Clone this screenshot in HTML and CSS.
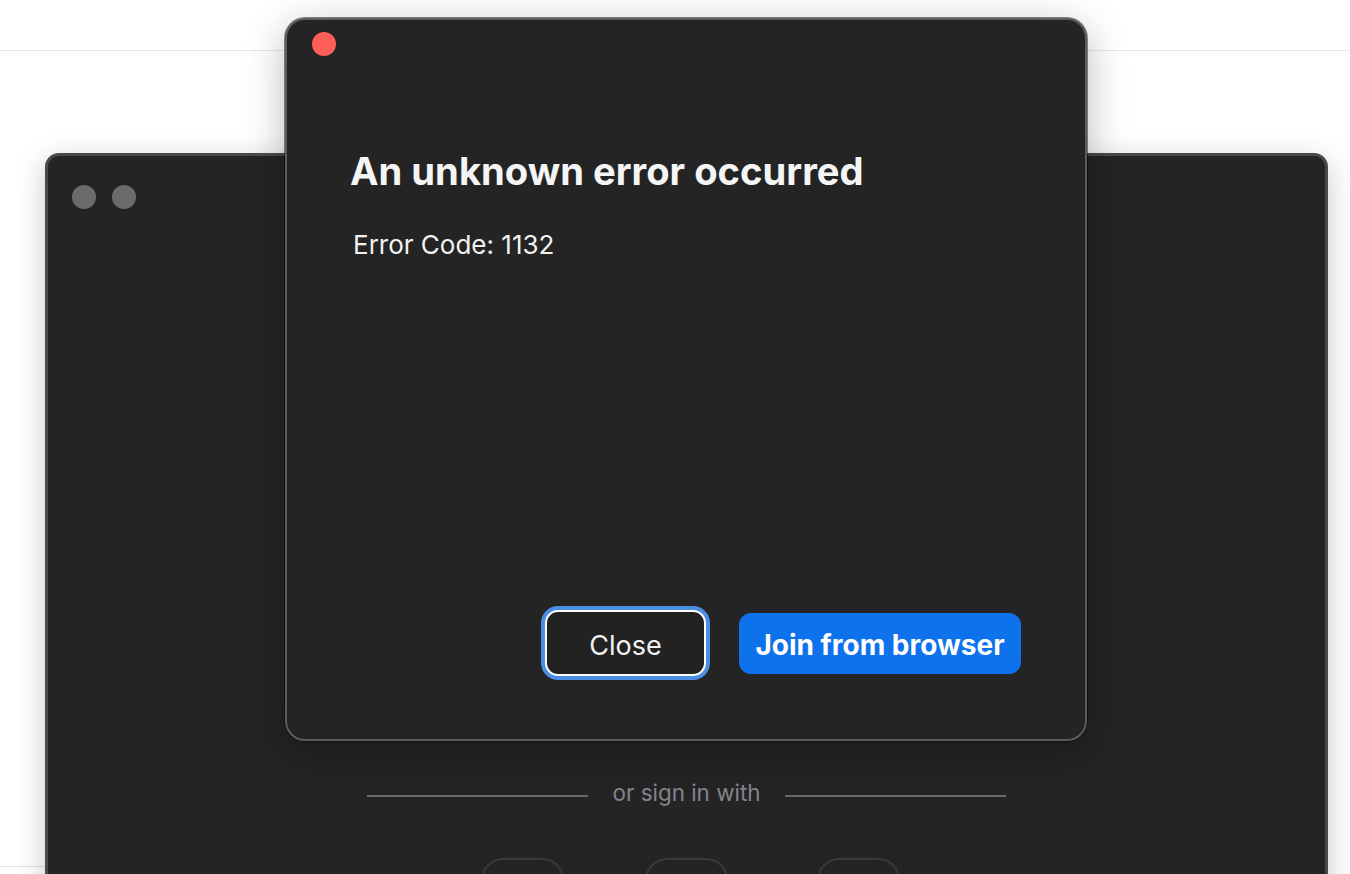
FILE: index.html
```html
<!DOCTYPE html>
<html lang="en">
  <head>
    <meta charset="UTF-8" />
    <meta name="viewport" content="width=device-width, initial-scale=1.0" />
    <title>An unknown error occurred</title>
    <link rel="stylesheet" href="styles.css">
  </head>
  <body>
    <div class="desktop">
      <div class="topBar"></div>
      <div class="bottomLine"></div>

      <!-- ventana de fondo (login) -->
      <div class="backWindow">
        <div class="titleBar">
          <span class="dot grey"></span>
          <span class="dot grey"></span>
        </div>
        <div class="signinRow">
          <span class="line"></span>
          <span class="signinText">or sign in with</span>
          <span class="line"></span>
        </div>
        <div class="providers">
          <div class="provider"></div>
          <div class="provider"></div>
          <div class="provider last"></div>
        </div>
      </div>

      <!-- dialogo de error -->
      <div class="dialog">
        <div class="dialogBar">
          <span class="dot red"></span>
        </div>
        <h1 class="dialogTitle">An unknown error occurred</h1>
        <p class="errorCode">Error Code: 1132</p>
        <div class="actions">
          <button class="btn btnClose">Close</button>
          <button class="btn btnJoin">Join from browser</button>
        </div>
      </div>
    </div>
  </body>
</html>
```

FILE: styles.css
```css
body {
  margin: 0;
  background-color: #ffffff;
  font-family: Inter, "Liberation Sans", Arial, sans-serif;
  overflow: hidden;
}

.desktop {
  position: relative;
  width: 1350px;
  height: 874px;
  overflow: hidden;
}

.topBar {
  height: 50px;
  border-bottom: 1px solid #e8e8e8;
}

.bottomLine {
  position: absolute;
  left: 0;
  top: 866px;
  width: 60px;
  border-bottom: 1px solid #e2e2ea;
}

.backWindow {
  position: absolute;
  left: 45px;
  top: 153px;
  width: 1277px;
  height: 760px;
  background-color: #242424;
  border: 3px solid #4a4a4a;
  border-radius: 14px;
  box-shadow: 0px 8px 30px rgba(0, 0, 0, 0.22);
  display: flex;
  flex-flow: column nowrap;
}

.titleBar {
  display: flex;
  gap: 16px;
  padding: 29px 0 0 24px;
}

.dot {
  width: 24px;
  height: 24px;
  border-radius: 50%;
  display: block;
}

.dot.grey {
  background-color: #6b6b6b;
}

.dot.red {
  background-color: #fe5f57;
}

.signinRow {
  display: flex;
  justify-content: center;
  align-items: center;
  gap: 25px;
  margin-top: 571px;
  height: 26px;
}

.line {
  width: 221px;
  height: 2px;
  background-color: #696969;
  margin-top: 5px;
}

.signinText {
  color: #85838d;
  font-size: 22.4px;
  line-height: 26px;
}

.providers {
  display: flex;
  justify-content: center;
  gap: 81px;
  margin-top: 52px;
  padding-left: 7px;
}

.provider {
  width: 83px;
  height: 83px;
  border: 2px solid #3a3a3a;
  border-radius: 22px;
  box-sizing: border-box;
}

.provider.last {
  margin-left: 8px;
}

.dialog {
  position: absolute;
  left: 285px;
  top: 18px;
  width: 798px;
  height: 719px;
  background-color: #242424;
  border: 2px solid #5c5c5c;
  border-radius: 20px;
  box-shadow: 0px 0px 0px 1px rgba(0, 0, 0, 0.45), 0px 10px 40px rgba(0, 0, 0, 0.28);
  display: flex;
  flex-flow: column nowrap;
}

.dialogBar {
  padding: 12px 0 0 25px;
}

.dialogTitle {
  margin: 92px 0 0 63px;
  color: #f5f5f5;
  font-size: 38.2px;
  line-height: 46px;
  font-weight: 700;
}

.errorCode {
  margin: 36px 0 0 66px;
  color: #f2f2f2;
  font-size: 26px;
  line-height: 30px;
}

.actions {
  margin-top: auto;
  display: flex;
  justify-content: flex-end;
  align-items: center;
  gap: 33px;
  padding: 0 64px 63px 0;
}

.btn {
  font-family: Inter, "Liberation Sans", Arial, sans-serif;
  cursor: pointer;
  box-sizing: border-box;
  padding-top: 5px;
}

.btnClose {
  width: 161px;
  height: 66px;
  background-color: #222222;
  color: #f2f2f2;
  font-size: 27px;
  border: 2px solid #ffffff;
  border-radius: 13px;
  box-shadow: 0px 0px 0px 4px #4a8fe3;
}

.btnJoin {
  width: 282px;
  height: 61px;
  background-color: #0e72ed;
  color: #ffffff;
  font-size: 28px;
  font-weight: 700;
  border: none;
  border-radius: 12px;
}
```
